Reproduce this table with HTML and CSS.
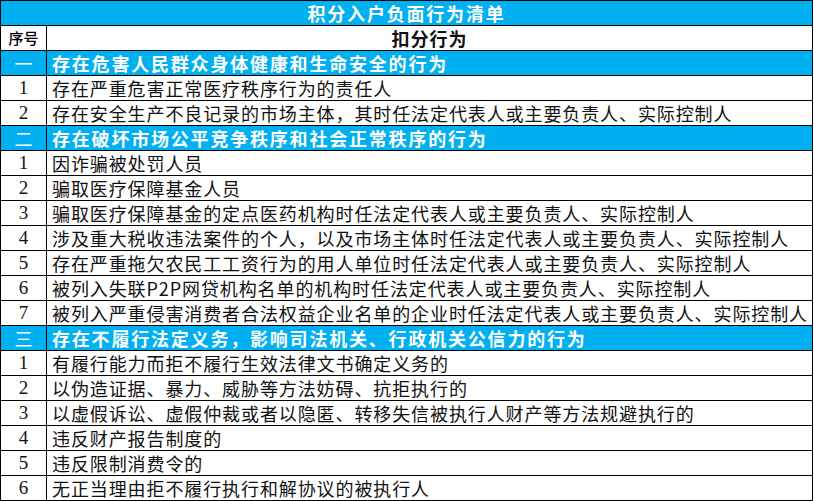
FILE: index.html
```html
<!DOCTYPE html>
<html lang="zh-CN">
<head>
<meta charset="utf-8">
<title>积分入户负面行为清单</title>
<link rel="stylesheet" href="styles.css">
</head>
<body>
<table class="sheet">
  <colgroup><col class="c-no"><col class="c-text"></colgroup>
  <tr class="title"><td colspan="2">积分入户负面行为清单</td></tr>
  <tr class="head"><td class="no">序号</td><td class="ctr">扣分行为</td></tr>
  <tr class="sec"><td class="no">一</td><td>存在危害人民群众身体健康和生命安全的行为</td></tr>
  <tr><td class="no num">1</td><td>存在严重危害正常医疗秩序行为的责任人</td></tr>
  <tr><td class="no num">2</td><td>存在安全生产不良记录的市场主体，其时任法定代表人或主要负责人、实际控制人</td></tr>
  <tr class="sec"><td class="no">二</td><td>存在破坏市场公平竞争秩序和社会正常秩序的行为</td></tr>
  <tr><td class="no num">1</td><td>因诈骗被处罚人员</td></tr>
  <tr><td class="no num">2</td><td>骗取医疗保障基金人员</td></tr>
  <tr><td class="no num">3</td><td>骗取医疗保障基金的定点医药机构时任法定代表人或主要负责人、实际控制人</td></tr>
  <tr><td class="no num">4</td><td>涉及重大税收违法案件的个人，以及市场主体时任法定代表人或主要负责人、实际控制人</td></tr>
  <tr><td class="no num">5</td><td>存在严重拖欠农民工工资行为的用人单位时任法定代表人或主要负责人、实际控制人</td></tr>
  <tr><td class="no num">6</td><td>被列入失联P2P网贷机构名单的机构时任法定代表人或主要负责人、实际控制人</td></tr>
  <tr><td class="no num">7</td><td>被列入严重侵害消费者合法权益企业名单的企业时任法定代表人或主要负责人、实际控制人</td></tr>
  <tr class="sec"><td class="no">三</td><td>存在不履行法定义务，影响司法机关、行政机关公信力的行为</td></tr>
  <tr><td class="no num">1</td><td>有履行能力而拒不履行生效法律文书确定义务的</td></tr>
  <tr><td class="no num">2</td><td>以伪造证据、暴力、威胁等方法妨碍、抗拒执行的</td></tr>
  <tr><td class="no num">3</td><td>以虚假诉讼、虚假仲裁或者以隐匿、转移失信被执行人财产等方法规避执行的</td></tr>
  <tr><td class="no num">4</td><td>违反财产报告制度的</td></tr>
  <tr><td class="no num">5</td><td>违反限制消费令的</td></tr>
  <tr><td class="no num">6</td><td>无正当理由拒不履行执行和解协议的被执行人</td></tr>
</table>
</body>
</html>
```

FILE: styles.css
```css
html, body {
  margin: 0;
  padding: 0;
  background: #ffffff;
}

.sheet {
  border-collapse: collapse;
  width: 813px;
  table-layout: fixed;
  font-family: "Noto Sans CJK SC", "Noto Sans", sans-serif;
  font-size: 18px;
  color: #111111;
}

.c-no { width: 46px; }

.sheet tr { height: 25px; }

.sheet td {
  border: 1px solid #000000;
  padding: 0 0 0 5px;
  line-height: 22px;
  white-space: nowrap;
  overflow: hidden;
  letter-spacing: 0.9px;
  vertical-align: middle;
}

.sheet td.no {
  text-align: center;
  padding: 0;
  letter-spacing: 0;
  font-weight: normal;
}

.sheet td.num {
  font-family: "Liberation Serif", "Times New Roman", serif;
  font-size: 19px;
}

.title td {
  background: #00b0f0;
  color: #ffffff;
  font-weight: bold;
  text-align: center;
  padding: 0;
  letter-spacing: 1.8px;
}

.head td {
  font-weight: bold;
  text-align: center;
  padding: 0;
  letter-spacing: 1px;
}

.head td.no {
  font-size: 15px;
  font-weight: 500;
  color: #000000;
}

.sec td {
  background: #00b0f0;
  color: #ffffff;
  font-weight: bold;
  letter-spacing: 1.8px;
}
```
